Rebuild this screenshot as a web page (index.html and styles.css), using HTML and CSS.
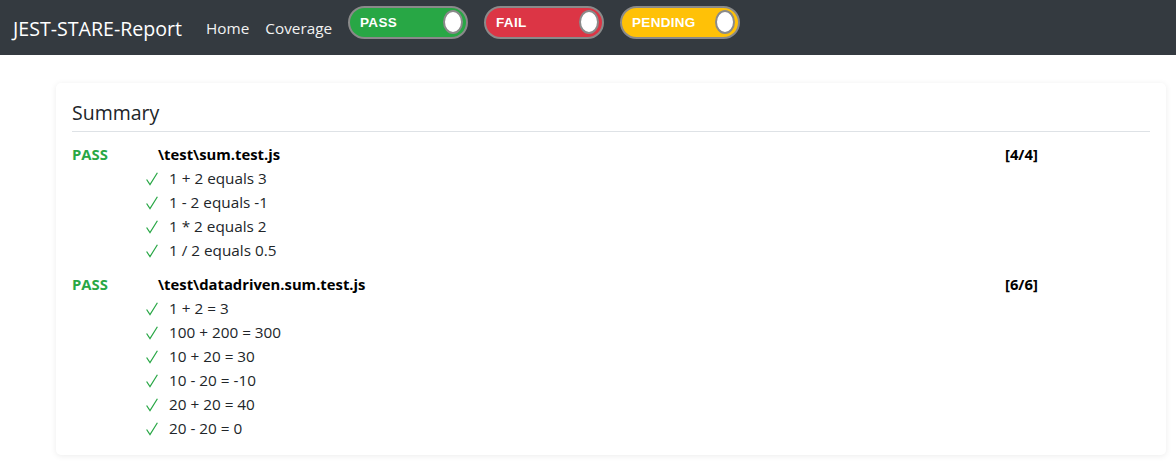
FILE: index.html
```html
<!DOCTYPE html>
<html lang="en">
<head>
<meta charset="utf-8">
<title>JEST-STARE-Report</title>
<link rel="stylesheet" href="styles.css">
</head>
<body>
<nav class="navbar">
  <span class="brand">JEST-STARE-Report</span>
  <a class="nav-link" href="#">Home</a>
  <a class="nav-link" href="#">Coverage</a>
  <div class="toggles">
    <div class="toggle pass"><span class="toggle-label">PASS</span><span class="knob"></span></div>
    <div class="toggle fail"><span class="toggle-label">FAIL</span><span class="knob"></span></div>
    <div class="toggle pending"><span class="toggle-label">PENDING</span><span class="knob"></span></div>
  </div>
</nav>
<main class="page">
  <section class="card">
    <h5 class="card-title">Summary</h5>
    <div class="suite">
      <div class="suite-row">
        <span class="status">PASS</span>
        <span class="file">\test\sum.test.js</span>
        <span class="count">[4/4]</span>
      </div>
      <ul class="tests">
        <li><svg class="check" viewBox="0 0 12 14"><polyline points="0.6,7.5 4,12.6 11.4,0.8"/></svg>1 + 2 equals 3</li>
        <li><svg class="check" viewBox="0 0 12 14"><polyline points="0.6,7.5 4,12.6 11.4,0.8"/></svg>1 - 2 equals -1</li>
        <li><svg class="check" viewBox="0 0 12 14"><polyline points="0.6,7.5 4,12.6 11.4,0.8"/></svg>1 * 2 equals 2</li>
        <li><svg class="check" viewBox="0 0 12 14"><polyline points="0.6,7.5 4,12.6 11.4,0.8"/></svg>1 / 2 equals 0.5</li>
      </ul>
    </div>
    <div class="suite">
      <div class="suite-row">
        <span class="status">PASS</span>
        <span class="file">\test\datadriven.sum.test.js</span>
        <span class="count">[6/6]</span>
      </div>
      <ul class="tests">
        <li><svg class="check" viewBox="0 0 12 14"><polyline points="0.6,7.5 4,12.6 11.4,0.8"/></svg>1 + 2 = 3</li>
        <li><svg class="check" viewBox="0 0 12 14"><polyline points="0.6,7.5 4,12.6 11.4,0.8"/></svg>100 + 200 = 300</li>
        <li><svg class="check" viewBox="0 0 12 14"><polyline points="0.6,7.5 4,12.6 11.4,0.8"/></svg>10 + 20 = 30</li>
        <li><svg class="check" viewBox="0 0 12 14"><polyline points="0.6,7.5 4,12.6 11.4,0.8"/></svg>10 - 20 = -10</li>
        <li><svg class="check" viewBox="0 0 12 14"><polyline points="0.6,7.5 4,12.6 11.4,0.8"/></svg>20 + 20 = 40</li>
        <li><svg class="check" viewBox="0 0 12 14"><polyline points="0.6,7.5 4,12.6 11.4,0.8"/></svg>20 - 20 = 0</li>
      </ul>
    </div>
  </section>
</main>
</body>
</html>
```

FILE: styles.css
```css
* { box-sizing: border-box; }
body {
  margin: 0;
  font-family: "Open Sans", "Noto Sans", sans-serif;
  font-size: 15.3px;
  line-height: 24px;
  color: #212529;
  background: #fff;
}
.navbar {
  height: 55px;
  background: #343a40;
  display: flex;
  align-items: center;
  padding: 0 13px;
}
.brand {
  color: #fff;
  font-size: 19.6px;
  margin-right: 24px;
  margin-top: 3px;
}
.nav-link {
  color: #f2f2f2;
  text-decoration: none;
  font-size: 15.3px;
  margin-right: 16px;
  margin-top: 1px;
}
.toggles {
  display: flex;
  gap: 16px;
  margin-top: -11px;
}
.toggle {
  width: 120px;
  height: 33px;
  border: 2px solid #8a8a8a;
  border-radius: 17px;
  display: flex;
  align-items: center;
  justify-content: space-between;
  padding: 0 3px 0 10px;
}
.toggle.pass { background: #28a745; }
.toggle.fail { background: #dc3545; }
.toggle.pending { background: #ffc107; }
.toggle-label {
  color: #fff;
  font-family: "Liberation Sans", Arial, sans-serif;
  font-weight: bold;
  font-size: 13.5px;
  letter-spacing: 0.3px;
  margin-top: 1px;
}
.knob {
  width: 20px;
  height: 24px;
  border-radius: 50%;
  background: #fff;
  border: 2px solid #8a8a8a;
}
.page {
  padding: 28px 10px 8px 56px;
}
.card {
  background: #fff;
  border-radius: 5px;
  box-shadow: 0 1px 6px rgba(0, 0, 0, 0.08);
  padding: 16px 16px 15px;
}
.card-title {
  margin: 0;
  font-size: 19.5px;
  font-weight: 500;
  line-height: 26px;
  padding: 1px 0 5px;
  border-bottom: 1px solid #dee2e6;
  margin-bottom: 10px;
}
.suite + .suite { margin-top: 10px; }
.suite-row {
  display: grid;
  grid-template-columns: 86px 1fr 145px;
  font-weight: bold;
  font-size: 14.8px;
}
.status { color: #28a745; }
.file { color: #000; }
.count { color: #000; }
.tests {
  list-style: none;
  margin: 0;
  padding: 0 0 0 74px;
}
.tests li {
  display: flex;
  align-items: center;
}
.check {
  width: 12px;
  height: 14px;
  margin-right: 11px;
  margin-top: 1px;
  fill: none;
  stroke: #28a745;
  stroke-width: 1.2;
}
```
